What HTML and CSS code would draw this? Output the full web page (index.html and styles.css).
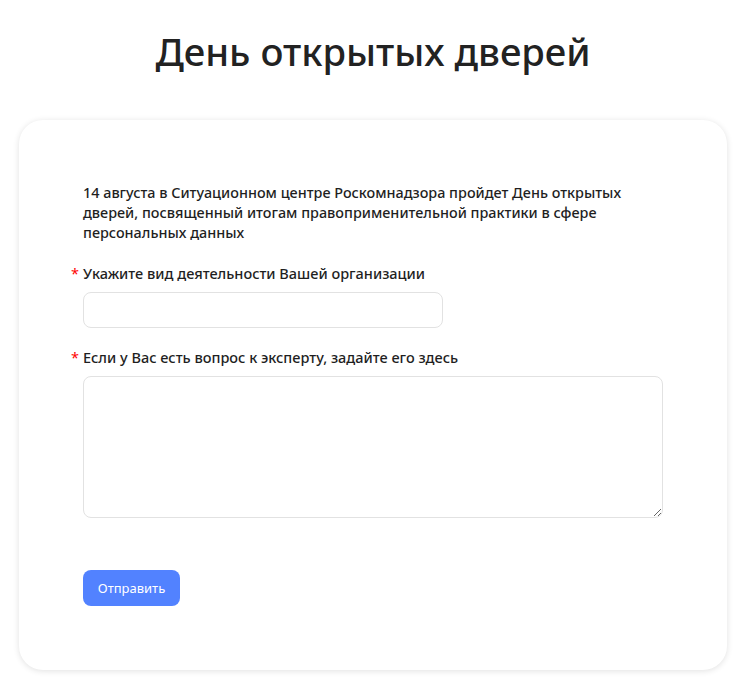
FILE: index.html
```html
<!DOCTYPE html>
<html lang="ru">
<head>
<meta charset="utf-8">
<title>День открытых дверей</title>
<link rel="stylesheet" href="styles.css">
</head>
<body>
<h1 class="title">День открытых дверей</h1>
<main class="card">
  <form class="form">
    <p class="intro">14 августа в Ситуационном центре Роскомнадзора пройдет День открытых дверей, посвященный итогам правоприменительной практики в сфере персональных данных</p>
    <div class="field">
      <label class="label" for="f1"><span class="req">*</span>Укажите вид деятельности Вашей организации</label>
      <input class="input" id="f1" type="text">
    </div>
    <div class="field">
      <label class="label" for="f2"><span class="req">*</span>Если у Вас есть вопрос к эксперту, задайте его здесь</label>
      <textarea class="textarea" id="f2"></textarea>
    </div>
    <button class="submit" type="button">Отправить</button>
  </form>
</main>
</body>
</html>
```

FILE: styles.css
```css
* { box-sizing: border-box; }
html, body { margin: 0; padding: 0; background: #fff; }
body {
  font-family: "Noto Sans", "Open Sans", sans-serif;
  color: #222;
  padding-bottom: 16px;
}
.title {
  margin: 0;
  padding-top: 27px;
  height: 120px;
  text-align: center;
  font-size: 38.2px;
  line-height: 48px;
  font-weight: 500;
  color: #222;
}
.card {
  margin: 0 19px;
  height: 550px;
  border-radius: 24px;
  background: #fff;
  box-shadow: 0 1px 6px rgba(0,0,0,0.12);
  padding: 63px 64px 0 64px;
}
.form {
  width: 580px;
  display: flex;
  flex-direction: column;
}
.intro {
  margin: 0;
  font-size: 14.4px;
  line-height: 20px;
  font-weight: 500;
  color: #1f1f1f;
}
.field {
  display: flex;
  flex-direction: column;
  margin-top: 19px;
}
.field + .field { margin-top: 18px; }
.label {
  position: relative;
  font-size: 14.5px;
  line-height: 22px;
  font-weight: 500;
  margin-bottom: 8px;
  color: #1f1f1f;
}
.req {
  position: absolute;
  left: -12px;
  top: 0;
  color: #ff0000;
  font-weight: 400;
}
.input {
  width: 360px;
  height: 36px;
  border: 1px solid #e2e2e2;
  border-radius: 8px;
  background: #fff;
  font: inherit;
}
.textarea {
  width: 580px;
  height: 142px;
  border: 1px solid #e2e2e2;
  border-radius: 8px;
  background: #fff;
  font: inherit;
  resize: vertical;
}
.submit {
  margin-top: 52px;
  align-self: flex-start;
  width: 97px;
  height: 36px;
  border: 0;
  border-radius: 8px;
  background: #5282ff;
  color: #fff;
  font-family: inherit;
  font-size: 13px;
  font-weight: 400;
}
```
